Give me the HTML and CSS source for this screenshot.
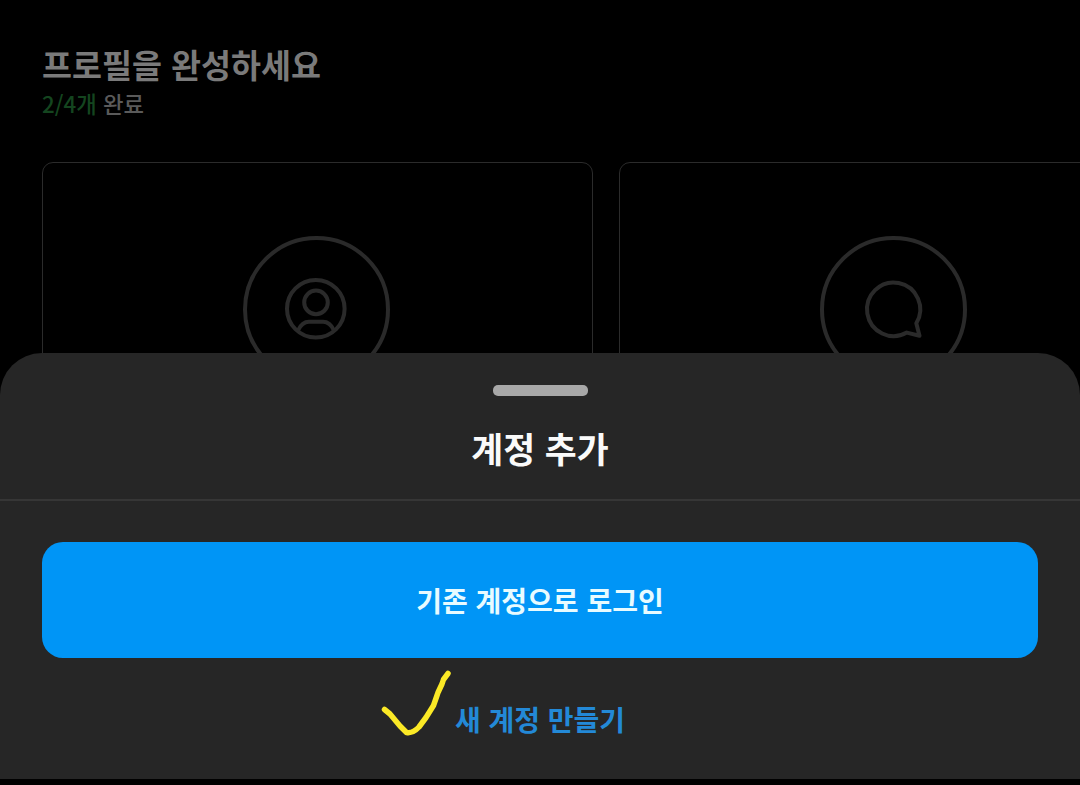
FILE: index.html
```html
<!DOCTYPE html>
<html lang="ko">
<head>
  <meta charset="UTF-8">
  <title>계정 추가</title>
  <link rel="stylesheet" href="styles.css">
</head>
<body>

<main class="profile">
  <h2 class="profile-title">프로필을 완성하세요</h2>
  <p class="profile-progress"><span class="count">2/4개</span> 완료</p>

  <div class="cards">
    <div class="card">
      <svg class="card-icon" viewBox="0 0 147 147">
        <circle cx="73.5" cy="73.5" r="71.5"/>
        <circle cx="72.8" cy="72.8" r="28.8"/>
        <circle cx="73" cy="66.4" r="11.8"/>
        <path d="M55 94.5C58 88 62 85.8 66 85.8H80C84 85.8 88 88 91 94.5"/>
      </svg>
    </div>
    <div class="card">
      <svg class="card-icon" viewBox="0 0 147 147">
        <circle cx="73.5" cy="73.5" r="71.5"/>
        <path d="M96.3 87.3A26.6 26.8 0 1 0 86.8 96.6L99.5 99.8Z"/>
      </svg>
    </div>
  </div>
</main>

<div class="sheet">
  <div class="handle"></div>
  <h1 class="sheet-title">계정 추가</h1>
  <div class="actions">
    <button class="btn login">기존 계정으로 로그인</button>
    <button class="btn create">
      새 계정 만들기
      <svg class="check" viewBox="0 0 72 70">
        <path d="M5.500 39.500L11 44L21 56L27.500 62.500Q34 63.500 40 57L47 47.500L54.500 35.500L58 25.500L59 22.500L63 14L64.500 9.500L69 3.500"/>
      </svg>
    </button>
  </div>
</div>

</body>
</html>
```
FILE: styles.css
```css
* {
  box-sizing: border-box;
}

body {
  margin: 0;
  height: 785px;
  overflow: hidden;
  background-color: #000;
  font-family: "Noto Sans CJK KR", sans-serif;
}

/* the cards are cut off where the sheet begins */
.profile {
  height: 353px;
  padding: 40px 0 0 42px;
  overflow: hidden;
}

.profile-title {
  margin: 0;
  font-size: 32.6px;
  line-height: 48px;
  font-weight: 700;
  color: #7a7a7a;
}

.profile-progress {
  margin: 0;
  font-size: 22.3px;
  line-height: 30px;
  font-weight: 500;
  color: #5a5a5a;
}

.count {
  color: #14451f;
}

.cards {
  display: flex;
  gap: 26px;
  margin-top: 44px;
}

.card {
  flex: none;
  width: 551px;
  height: 420px;
  padding: 73px 2px 0 0;
  border: 1px solid #2b2b2b;
  border-radius: 11px;
}

.card-icon {
  display: block;
  width: 147px;
  height: 147px;
  margin: 0 auto;
  fill: none;
  stroke: #2a2a2a;
  stroke-width: 4;
  stroke-linejoin: round;
}

.sheet {
  height: 426px;
  padding-top: 32px;
  background-color: #262626;
  border-radius: 42px 42px 0 0;
}

.handle {
  width: 95px;
  height: 11px;
  margin: 0 auto;
  border-radius: 5px;
  background-color: #a8a8a8;
}

.sheet-title {
  margin: 0;
  padding: 26px 0 25px;
  border-bottom: 2px solid #363636;
  font-size: 34.7px;
  line-height: 52px;
  font-weight: 700;
  text-align: center;
  color: #fafafa;
}

.actions {
  display: flex;
  flex-direction: column;
  align-items: center;
  gap: 33px;
  padding: 41px 42px 0;
}

.btn {
  position: relative;
  padding: 0;
  border: none;
  background: none;
  font-family: inherit;
  font-size: 28px;
  font-weight: 700;
  cursor: pointer;
}

.btn.login {
  width: 100%;
  height: 116px;
  border-radius: 21px;
  background-color: #0095f6;
  color: #e8fbff;
}

.btn.create {
  height: 56px;
  color: #2389d7;
}

.check {
  position: absolute;
  top: -21px;
  left: -76px;
  width: 72px;
  height: 70px;
  fill: none;
  stroke: #fbe926;
  stroke-width: 5.5;
  stroke-linecap: round;
  stroke-linejoin: round;
}
```
